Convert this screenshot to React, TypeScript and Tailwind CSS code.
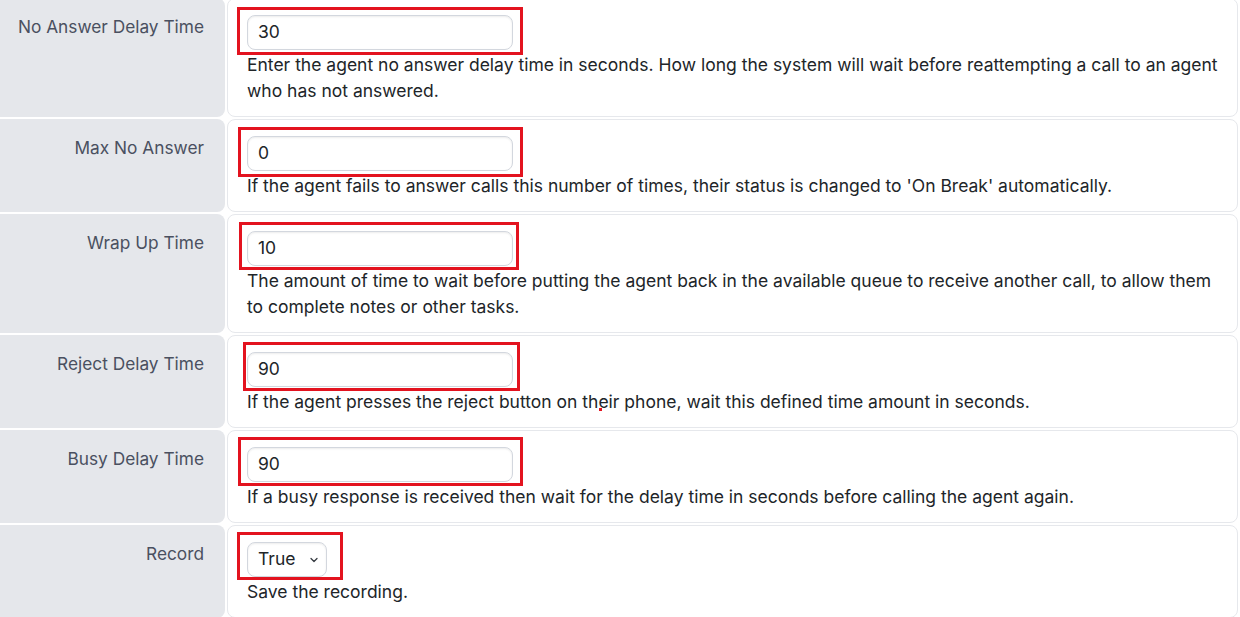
import { ChevronDown } from 'lucide-react'

type Row = {
  label: string
  value: string
  help: string
  kind?: 'select'
  // hand-drawn highlight box around the field, offsets from the field edges
  mark: { l: string; r: string; t: string; b: string }
}

const rows: Row[] = [
  {
    label: 'No Answer Delay Time',
    value: '30',
    help: 'Enter the agent no answer delay time in seconds. How long the system will wait before reattempting a call to an agent who has not answered.',
    mark: { l: '-left-[10px]', r: '-right-[10px]', t: '-top-[8px]', b: '-bottom-[5px]' },
  },
  {
    label: 'Max No Answer',
    value: '0',
    help: "If the agent fails to answer calls this number of times, their status is changed to 'On Break' automatically.",
    mark: { l: '-left-[9px]', r: '-right-[10px]', t: '-top-[9px]', b: '-bottom-[6px]' },
  },
  {
    label: 'Wrap Up Time',
    value: '10',
    help: 'The amount of time to wait before putting the agent back in the available queue to receive another call, to allow them to complete notes or other tasks.',
    mark: { l: '-left-[8px]', r: '-right-[6px]', t: '-top-[9px]', b: '-bottom-[4px]' },
  },
  {
    label: 'Reject Delay Time',
    value: '90',
    help: 'If the agent presses the reject button on their phone, wait this defined time amount in seconds.',
    mark: { l: '-left-[4px]', r: '-right-[7px]', t: '-top-[10px]', b: '-bottom-[4px]' },
  },
  {
    label: 'Busy Delay Time',
    value: '90',
    help: 'If a busy response is received then wait for the delay time in seconds before calling the agent again.',
    mark: { l: '-left-[9px]', r: '-right-[10px]', t: '-top-[10px]', b: '-bottom-[4px]' },
  },
  {
    label: 'Record',
    value: 'True',
    kind: 'select',
    help: 'Save the recording.',
    mark: { l: '-left-[10px]', r: '-right-[16px]', t: '-top-[10px]', b: '-bottom-[3px]' },
  },
]

function Field({ row }: { row: Row }) {
  const box =
    'h-[35px] rounded-lg border border-[#d3d7de] bg-white shadow-[inset_0_1px_2px_rgba(0,0,0,0.08)] flex items-center pl-[10px] text-[17.5px] text-[#212529]'

  return (
    <div className="relative w-fit">
      {row.kind === 'select' ? (
        <div className={`${box} w-[80px] pr-[6px] justify-between`}>
          <span>{row.value}</span>
          <ChevronDown className="w-[12px] h-[12px] text-[#343a40]" strokeWidth={2.5} />
        </div>
      ) : (
        <div className={`${box} w-[266px]`}>{row.value}</div>
      )}
      <div
        className={`absolute ${row.mark.l} ${row.mark.r} ${row.mark.t} ${row.mark.b} border-[3px] border-[#e3131f] pointer-events-none`}
      />
    </div>
  )
}

export default function App() {
  return (
    <div
      className="relative h-[617px] overflow-hidden bg-white"
      style={{ fontFamily: 'Inter, "Noto Sans", sans-serif' }}
    >
      <div className="-mt-[2px] -ml-[10px] w-[1248px] flex flex-col gap-[2px]">
        {rows.map((row) => (
          <div key={row.label} className="flex gap-[2px]">
            {/* label cell */}
            <div className="w-[235px] shrink-0 rounded-lg bg-[#e5e7eb] pt-[17px] pr-[21px] text-right text-[17.3px] leading-[24px] text-[#4a5060]">
              {row.label}
            </div>
            {/* value cell */}
            <div className="flex-1 rounded-lg border border-[#e6e8ec] bg-white pl-[19px] pr-[10px] pt-[16px] pb-[12px]">
              <Field row={row} />
              <p className="mt-[2px] text-[17.5px] leading-[26px] text-[#212529]">{row.help}</p>
            </div>
          </div>
        ))}
      </div>
      {/* stray red mark under "their" */}
      <span className="absolute left-[599px] top-[408px] w-[3px] h-[3px] bg-[#e3131f]" />
    </div>
  )
}
